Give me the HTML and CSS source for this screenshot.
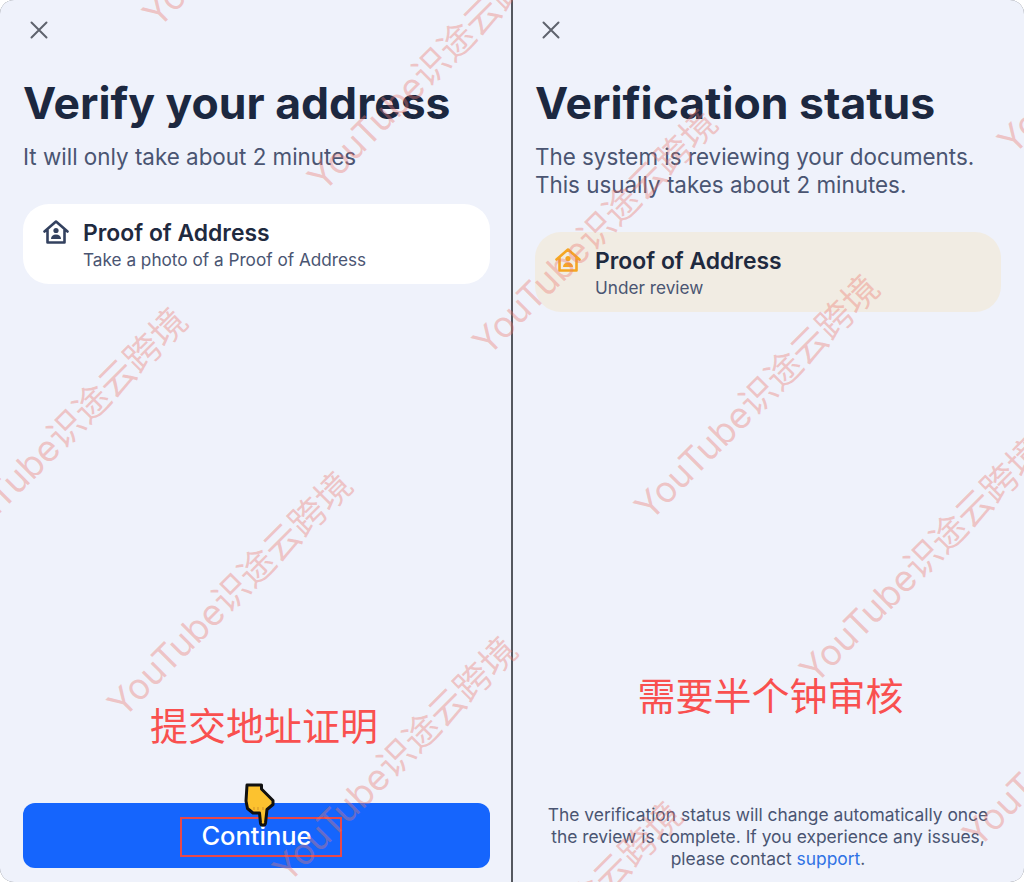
FILE: index.html
```html
<!DOCTYPE html>
<html lang="en">
<head>
    <meta charset="UTF-8">
    <meta name="viewport" content="width=device-width, initial-scale=1.0">
    <title>Verify your address</title>
    <link rel="stylesheet" href="styles.css">
</head>
<body>

<div class="screens">
    <section class="panel panel-left">
        <svg class="close" viewBox="0 0 18 18" width="18" height="18"><path d="M1.5 1.5l15 15M16.5 1.5l-15 15"/></svg>
        <h1>Verify your address</h1>
        <p class="lead">It will only take about 2 minutes</p>
        <div class="doc">
            <svg class="house" viewBox="0 0 26 24" width="26" height="24"><path class="walls" d="M1.5 11.5L13 1.5l11.500 10M4.500 9.500V22.500H21.500V9.500"/><circle cx="13" cy="10.500" r="2.600"/><path d="M8 19c0-3 2-4.500 5-4.500s5 1.500 5 4.500z"/></svg>
            <div>
                <div class="doc-title">Proof of Address</div>
                <div class="doc-sub">Take a photo of a Proof of Address</div>
            </div>
        </div>
        <div class="note note-left">提交地址证明</div>
        <button type="button" class="continue"><span class="continue-box">Continue</span></button>
        <svg class="hand" viewBox="0 0 32 44" width="32" height="44"><path d="M3 2H17.500V6L29 17.500V21.500L23 26.500L21.500 40C21 43 17 43 16.500 40L15.500 30H9L3.500 25.500L2 18z"/><path class="hand-line" d="M10 24v3M14 24v3M19 24v3"/></svg>
    </section>

    <section class="panel panel-right">
        <svg class="close" viewBox="0 0 18 18" width="18" height="18"><path d="M1.5 1.5l15 15M16.5 1.5l-15 15"/></svg>
        <h1>Verification status</h1>
        <p class="lead">The system is reviewing your documents.<br>This usually takes about 2 minutes.</p>
        <div class="doc doc-review">
            <svg class="house" viewBox="0 0 26 24" width="26" height="24"><path class="walls" d="M1.5 11.5L13 1.5l11.500 10M4.500 9.500V22.500H21.500V9.500"/><circle cx="13" cy="10.500" r="2.600"/><path d="M8 19c0-3 2-4.500 5-4.500s5 1.500 5 4.500z"/></svg>
            <div>
                <div class="doc-title">Proof of Address</div>
                <div class="doc-sub">Under review</div>
            </div>
        </div>
        <div class="note note-right">需要半个钟审核</div>
        <p class="foot">The verification status will change automatically once<br>the review is complete. If you experience any issues,<br>please contact <a href="#">support</a>.</p>
    </section>

    <div class="marks">
        <span class="mark m1">YouTube识途云跨境</span>
        <span class="mark m2">YouTube识途云跨境</span>
        <span class="mark m3">YouTube识途云跨境</span>
        <span class="mark m4">YouTube识途云跨境</span>
        <span class="mark m5">YouTube识途云跨境</span>
        <span class="mark m6">YouTube识途云跨境</span>
        <span class="mark m7">YouTube识途云跨境</span>
        <span class="mark m8">YouTube识途云跨境</span>
        <span class="mark m9">YouTube识途云跨境</span>
        <span class="mark m10">YouTube识途云跨境</span>
        <span class="mark m11">YouTube识途云跨境</span>
        <span class="mark m12">YouTube识途云跨境</span>
    </div>
</div>

</body>
</html>
```

FILE: styles.css
```css
* { box-sizing: border-box; }
body { margin: 0; background-color: #fff; font-family: Inter, "Noto Sans", sans-serif; }
.screens { position: relative; display: flex; gap: 2px; width: 1024px; height: 882px; overflow: hidden; background-color: #55585f; }

.panel { position: relative; display: flex; flex-direction: column; padding: 0 23px 14px; background-color: #eff2fb; }
.panel-left { flex: none; width: 511px; padding-right: 21px; border-radius: 14px 0 0 14px; }
.panel-right { flex: 1; padding-left: 22px; padding-bottom: 12px; border-radius: 0 14px 14px 0; }
.screens::before { content: ""; position: absolute; inset: 0; border-radius: 14px; box-shadow: 0 0 0 20px #fff; pointer-events: none; }

.close { margin: 21px 0 0 7px; fill: none; stroke: #5f636d; stroke-width: 2; stroke-linecap: round; flex: none; }
h1 { margin: 36px 0 0; font-size: 44.5px; line-height: 56px; font-weight: 700; color: #1c2840; }
.lead { margin: 12px 0 0; font-size: 22.4px; line-height: 28px; color: #4a5572; }

.doc { display: flex; align-items: center; gap: 14px; height: 80px; margin-top: 33px; padding: 0 20px; border-radius: 26px; background-color: #fff; }
.doc-review { background-color: #f1ece3; }
.doc-title { font-size: 22.9px; line-height: 28px; font-weight: 600; color: #1f2a3f; }
.doc-sub { margin-top: 2px; font-size: 17.2px; line-height: 21px; color: #4a5572; }

.house { flex: none; margin-top: -24px; fill: #33415f; }
.house .walls { fill: none; stroke: #33415f; stroke-width: 2.6; stroke-linejoin: round; stroke-linecap: round; }
.doc-review .house { fill: #f5a623; }
.doc-review .house .walls { stroke: #f5a623; }

.note { margin-top: auto; text-align: center; font-family: "Noto Sans CJK SC", sans-serif; font-size: 38px; line-height: 44px; color: #f9504f; }
.note-left { margin-bottom: 57px; padding-left: 15px; }
.note-right { margin-bottom: 88px; padding-left: 5px; }

.continue { display: flex; align-items: center; justify-content: center; width: 100%; height: 65px; padding: 0; border: 0; border-radius: 12px; background-color: #1565fd; font-family: inherit; color: #fff; }
.continue-box { display: flex; align-items: center; justify-content: center; width: 162px; height: 40px; margin: 3px 0 0 8px; padding: 0 8px 3px 0; border: 2px solid #e8484a; font-size: 25.5px; font-weight: 500; }
.hand { position: absolute; left: 244px; top: 783px; fill: #fcc22f; stroke: #111; stroke-width: 3; stroke-linejoin: round; }
.hand .hand-line { fill: none; stroke: #d1912a; stroke-width: 1; }

.foot { margin: 0; text-align: center; font-size: 17.4px; line-height: 22px; color: #4a5572; }
.foot a { color: #2f72e4; text-decoration: none; }

/* watermark */
.marks { position: absolute; inset: 0; overflow: hidden; pointer-events: none; }
.mark { position: absolute; white-space: nowrap; font-family: Inter, "Noto Sans CJK SC", sans-serif; font-size: 36px; line-height: 44px; color: rgba(236, 120, 110, 0.38); transform: rotate(-45deg); transform-origin: 0 50%; }
.m1 { left: 149px; top: -2px; }
.m2 { left: 314px; top: 162px; }
.m3 { left: 479px; top: 326px; }
.m4 { left: 641px; top: 491px; }
.m5 { left: 806px; top: 654px; }
.m6 { left: 969px; top: 818px; }
.m7 { left: -51px; top: 524px; }
.m8 { left: 114px; top: 688px; }
.m9 { left: 279px; top: 853px; }
.m10 { left: 1004px; top: 125px; }
.m11 { left: -241px; top: 393px; }
.m12 { left: 444px; top: 1018px; }
```
